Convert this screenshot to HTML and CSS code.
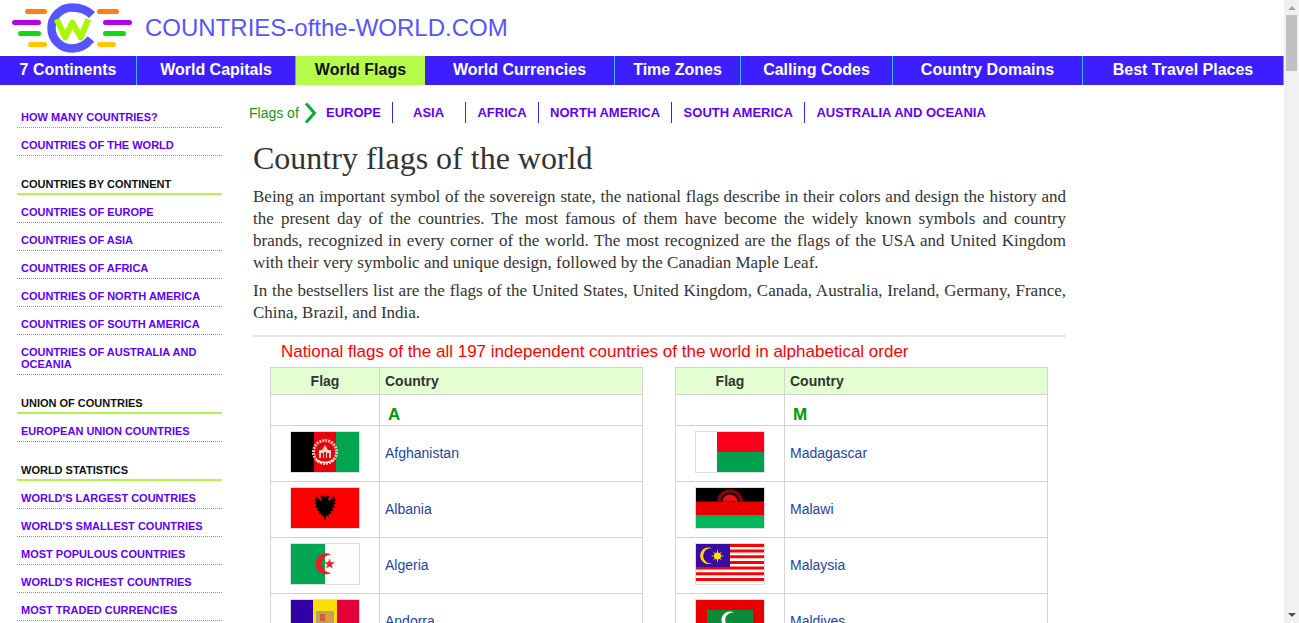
FILE: index.html
```html
<!DOCTYPE html>
<html lang="en">
<head>
  <meta charset="UTF-8" />
  <title>Country flags of the world</title>
  <link rel="stylesheet" href="styles.css">
</head>
<body>
<div class="window">
  <div class="page">
    <header class="top">
      <svg class="logo" width="120" height="52" viewBox="0 0 120 52">
        <g fill="none" stroke-width="5" stroke-linecap="round">
          <path stroke="#ff7f11" d="M15.500 8.500h17M87.500 8.500h17"/>
          <path stroke="#b400e6" d="M2.500 19.500h24M93.500 19.500h24"/>
          <path stroke="#11d811" d="M8.500 30.500h18M93.500 30.500h18"/>
          <path stroke="#ffc800" d="M18.500 41.500h14M87.500 41.500h14"/>
          <path stroke="#5555ff" stroke-width="8.500" stroke-linecap="butt" d="M80 12C75 7 68 4.500 60 4.500A20.500 20.500 0 0 0 60 45.500C67 45.500 74 42 79 36"/>
          <path stroke="#a6f900" stroke-width="6" stroke-linejoin="round" stroke-linecap="butt" d="M44.700 16.300l8.300 18 7.300-14.600 8.400 14.600 7.600-18"/>
        </g>
      </svg>
      <div class="site-name">COUNTRIES-ofthe-WORLD.COM</div>
    </header>

    <nav class="menu">
      <a class="w136" href="#">7 Continents</a>
      <a class="w158" href="#">World Capitals</a>
      <a class="w129 active" href="#">World Flags</a>
      <a class="w188" href="#">World Currencies</a>
      <a class="w125" href="#">Time Zones</a>
      <a class="w151" href="#">Calling Codes</a>
      <a class="w189" href="#">Country Domains</a>
      <a class="w200" href="#">Best Travel Places</a>
    </nav>

    <div class="columns">
      <aside class="side">
        <a href="#">HOW MANY COUNTRIES?</a>
        <a href="#">COUNTRIES OF THE WORLD</a>
        <h4>COUNTRIES BY CONTINENT</h4>
        <a href="#">COUNTRIES OF EUROPE</a>
        <a href="#">COUNTRIES OF ASIA</a>
        <a href="#">COUNTRIES OF AFRICA</a>
        <a href="#">COUNTRIES OF NORTH AMERICA</a>
        <a href="#">COUNTRIES OF SOUTH AMERICA</a>
        <a href="#">COUNTRIES OF AUSTRALIA AND OCEANIA</a>
        <h4>UNION OF COUNTRIES</h4>
        <a href="#">EUROPEAN UNION COUNTRIES</a>
        <h4>WORLD STATISTICS</h4>
        <a href="#">WORLD'S LARGEST COUNTRIES</a>
        <a href="#">WORLD'S SMALLEST COUNTRIES</a>
        <a href="#">MOST POPULOUS COUNTRIES</a>
        <a href="#">WORLD'S RICHEST COUNTRIES</a>
        <a href="#">MOST TRADED CURRENCIES</a>
      </aside>

      <main class="content">
        <div class="flags-of">
          <span class="flags-label">Flags of</span>
          <svg class="chevron" width="14" height="22" viewBox="0 0 14 22"><path d="M3 1.500l8.500 9.500-8.500 9.500" fill="none" stroke="#0aaa3c" stroke-width="3"/></svg>
          <a href="#">EUROPE</a>
          <a class="asia" href="#">ASIA</a>
          <a href="#">AFRICA</a>
          <a href="#">NORTH AMERICA</a>
          <a href="#">SOUTH AMERICA</a>
          <a href="#">AUSTRALIA AND OCEANIA</a>
        </div>

        <div class="article">
          <h1>Country flags of the world</h1>
          <p>Being an important symbol of the sovereign state, the national flags describe in their colors and design the history and the present day of the countries. The most famous of them have become the widely known symbols and country brands, recognized in every corner of the world. The most recognized are the flags of the USA and United Kingdom with their very symbolic and unique design, followed by the Canadian Maple Leaf.</p>
          <p>In the bestsellers list are the flags of the United States, United Kingdom, Canada, Australia, Ireland, Germany, France, China, Brazil, and India.</p>
          <hr>
        </div>

        <div class="caption">National flags of the all 197 independent countries of the world in alphabetical order</div>

        <div class="tables">
          <table>
            <tr><th class="col-flag">Flag</th><th class="col-name">Country</th></tr>
            <tr class="letter"><td></td><td>A</td></tr>
            <tr>
              <td><svg class="flag" viewBox="0 0 68 40">
                <rect width="23" height="40" fill="#000"/><rect x="23" width="22" height="40" fill="#e8000d"/><rect x="45" width="23" height="40" fill="#00a54f"/>
                <circle cx="34" cy="20" r="11.500" fill="none" stroke="#f3c4b2" stroke-width="3" stroke-dasharray="2 1"/>
                <path d="M28 26v-8h3l3-5 3 5h3v8z" fill="#f9d3c6"/><path d="M30 26v-5h2v5zM33 26v-6h2v6zM36 26v-5h2v5z" fill="#e8000d"/>
                <path d="M25 28q9 5 18 0" fill="none" stroke="#fbe6de" stroke-width="1.500"/>
              </svg></td>
              <td><a href="#">Afghanistan</a></td>
            </tr>
            <tr>
              <td><svg class="flag" viewBox="0 0 68 40">
                <rect width="68" height="40" fill="#f00"/>
                <path id="eagle-half" d="M34 33L32.500 27 30 29l.5-3.500-3 .5 1-3-3-.5 1.500-2.500-3-1 2-2-3-1.500 2-1.500-2.500-3 2.500.5-1-3.500 3.500 2.500 2.500 2.500 1-2.500-2-1.500 2.500-1.500L34 9z" fill="#000"/>
                <use href="#eagle-half" transform="matrix(-1 0 0 1 68 0)"/>
              </svg></td>
              <td><a href="#">Albania</a></td>
            </tr>
            <tr>
              <td><svg class="flag" viewBox="0 0 68 40">
                <rect width="34" height="40" fill="#00a651"/><rect x="34" width="34" height="40" fill="#fdfdfb"/>
                <path d="M40 10.500A10.500 10.500 0 1 0 40 29A9 9 0 1 1 40 10.500z" fill="#ee1c25"/>
                <path d="M38.500 14.500l1.300 3.800h4l-3.200 2.400 1.200 3.800-3.300-2.300-3.300 2.300 1.200-3.800-3.200-2.400h4z" fill="#ee1c25"/>
              </svg></td>
              <td><a href="#">Algeria</a></td>
            </tr>
            <tr>
              <td><svg class="flag" viewBox="0 0 68 40">
                <rect width="22" height="40" fill="#3300a8"/><rect x="22" width="24" height="40" fill="#fedf00"/><rect x="46" width="22" height="40" fill="#e4003a"/>
                <path d="M25 11h18v11q-1 7-9 9q-8-2-9-9z" fill="#b9a06c"/><rect x="29" y="14" width="5" height="7" fill="#d0603a"/><rect x="35" y="14" width="4" height="7" fill="#e8a020"/>
              </svg></td>
              <td><a href="#">Andorra</a></td>
            </tr>
          </table>

          <table>
            <tr><th class="col-flag">Flag</th><th class="col-name">Country</th></tr>
            <tr class="letter"><td></td><td>M</td></tr>
            <tr>
              <td><svg class="flag" viewBox="0 0 68 40">
                <rect width="68" height="40" fill="#fff"/><rect x="21" width="47" height="20" fill="#f9001d"/><rect x="21" y="20" width="47" height="20" fill="#00a14e"/>
              </svg></td>
              <td><a href="#">Madagascar</a></td>
            </tr>
            <tr>
              <td><svg class="flag" viewBox="0 0 68 40">
                <rect width="68" height="14" fill="#000"/><rect y="13.500" width="68" height="14" fill="#e80000"/><rect y="27" width="68" height="13" fill="#00b85c"/>
                <path d="M21 13.500a13 12 0 0 1 26 0z" fill="#8c0010"/><path d="M24.500 13.500a9.500 9 0 0 1 19 0z" fill="#000"/><path d="M26.500 13.500a7.500 7 0 0 1 15 0z" fill="#e8121a"/>
              </svg></td>
              <td><a href="#">Malawi</a></td>
            </tr>
            <tr>
              <td><svg class="flag" viewBox="0 0 68 40">
                <rect width="68" height="40" fill="#fff"/>
                <path d="M0 1.500h68M0 7h68M0 12.800h68M0 18.500h68M0 24h68M0 29.700h68M0 35.400h68" stroke="#f00" stroke-width="3"/>
                <rect width="34" height="23" fill="#3a0ba0"/>
                <path d="M16.500 4.500A8.300 8.300 0 1 0 16.500 19A7.500 7.500 0 1 1 16.500 4.500z" fill="#ffd900"/>
                <circle cx="21.500" cy="12" r="3.500" fill="#ffe600"/>
                <path d="M21.500 6v12M15.500 12h12M17.300 7.800l8.400 8.400M25.700 7.800l-8.400 8.400" stroke="#ffe600" stroke-width=".8"/>
              </svg></td>
              <td><a href="#">Malaysia</a></td>
            </tr>
            <tr>
              <td><svg class="flag" viewBox="0 0 68 40">
                <rect width="68" height="40" fill="#e70000"/><rect x="11" y="10" width="46" height="20" fill="#098b3a"/>
                <path d="M38 12.500A8.500 8.500 0 1 0 38 27.500A7.600 7.600 0 1 1 38 12.500z" fill="#fff"/>
              </svg></td>
              <td><a href="#">Maldives</a></td>
            </tr>
          </table>
        </div>
      </main>
    </div>
  </div>

  <div class="scrollbar">
    <span class="arrow-up"></span>
    <span class="thumb"></span>
    <span class="arrow-down"></span>
  </div>
</div>
</body>
</html>
```

FILE: styles.css
```css
html, body {
  margin: 0;
  height: 100%;
  overflow: hidden;
}

body {
  background-color: #fff;
  color: #333;
  font-family: 'Liberation Sans', Arial, sans-serif;
}

a {
  text-decoration: none;
}

.window {
  display: flex;
  height: 100vh;
}

.page {
  flex: 1;
  min-width: 0;
  overflow: hidden;
}

/* header */
.top {
  display: flex;
  align-items: center;
  height: 56px;
  padding-left: 12px;
}

.logo {
  display: block;
  margin-top: 2px;
}

.site-name {
  margin-left: 13px;
  font-size: 24px;
  color: #5555ff;
}

/* main menu */
.menu {
  display: flex;
  height: 29px;
  background-color: #3c1eff;
}

.menu a {
  box-sizing: border-box;
  border-right: 1px solid #3fb8d8;
  color: #fff;
  font-size: 16px;
  font-weight: bold;
  line-height: 28px;
  text-align: center;
}

.menu a.active {
  border-right: none;
  background-color: #b6fb4a;
  color: #111;
}

.w136 { width: 137px; }
.w158 { width: 159px; }
.w129 { width: 129px; }
.w188 { width: 190px; }
.w125 { width: 126px; }
.w151 { width: 152px; }
.w189 { width: 190px; }
.w200 { width: 201px; }

.columns {
  display: flex;
}

/* left column */
.side {
  flex: none;
  width: 205px;
  margin: 15px 0 0 17px;
}

.side a, .side h4 {
  display: block;
  font-size: 11px;
  font-weight: bold;
  line-height: 12px;
}

.side a {
  padding: 11px 4px 4px;
  border-bottom: 1px dotted #999;
  color: #5f00ff;
}

.side h4 {
  margin: 22px 0 0;
  padding: 0 4px 3px;
  border-bottom: 2px solid #b6f24a;
  color: #111;
}

/* right column */
.content {
  flex: none;
  width: 817px;
  margin-left: 27px;
}

.flags-of {
  display: flex;
  align-items: center;
  height: 21px;
  margin-top: 17px;
}

.flags-label {
  color: #119911;
  font-size: 14px;
}

.chevron {
  margin: 0 -2px 0 4px;
}

.flags-of a {
  padding: 0 11.25px;
  border-right: 1px solid #3c1eff;
  color: #5f00ff;
  font-size: 13px;
  font-weight: bold;
  line-height: 21px;
}

.flags-of a:last-child {
  border-right: none;
}

.flags-of .asia {
  box-sizing: border-box;
  width: 73px;
  padding-right: 12.5px;
  text-align: center;
}

.article {
  width: 813px;
  margin-left: 4px;
  font-family: 'Liberation Serif', 'Times New Roman', serif;
}

h1 {
  margin: 16px 0 9px;
  font-size: 32px;
  font-weight: normal;
  line-height: 38px;
}

.article p {
  margin: 0 0 6px;
  font-size: 17px;
  line-height: 22px;
  text-align: justify;
}

.article hr {
  height: 2px;
  margin: 11px 0 0;
  border: none;
  background-color: #e5e5e5;
}

.caption {
  margin: 5px 0 6px 32px;
  color: #f00;
  font-size: 17px;
  line-height: 19px;
}

/* flag tables */
.tables {
  display: flex;
  gap: 32px;
  margin-left: 21px;
}

table {
  flex: none;
  width: 373px;
  border-collapse: collapse;
  table-layout: fixed;
  font-size: 14px;
}

th, td {
  padding: 0;
  border: 1px solid #d3d3d3;
}

th {
  height: 26px;
  background-color: #e4ffd2;
}

.col-flag {
  width: 108px;
}

.col-name {
  padding-left: 5px;
  text-align: left;
}

td a {
  display: block;
  padding: 0 0 2px 5px;
  color: #2244aa;
}

.letter td {
  height: 31px;
  padding: 9px 0 0 8px;
  box-sizing: border-box;
  color: #009900;
  font-size: 17px;
  font-weight: bold;
}

.flag {
  display: block;
  box-sizing: border-box;
  width: 70px;
  height: 42px;
  margin: 5px auto 8px;
  border: 1px solid #ddd;
}

/* page scrollbar */
.scrollbar {
  position: relative;
  flex: none;
  width: 15px;
  background-color: #f1f1f1;
}

.thumb {
  position: absolute;
  top: 15px;
  left: 2px;
  width: 11px;
  height: 56px;
  background-color: #c1c1c1;
}

.arrow-up, .arrow-down {
  position: absolute;
  left: 4px;
  border-left: 4px solid transparent;
  border-right: 4px solid transparent;
}

.arrow-up {
  top: 6px;
  border-bottom: 4px solid #a3a3a3;
}

.arrow-down {
  bottom: 6px;
  border-top: 4px solid #505050;
}
```
